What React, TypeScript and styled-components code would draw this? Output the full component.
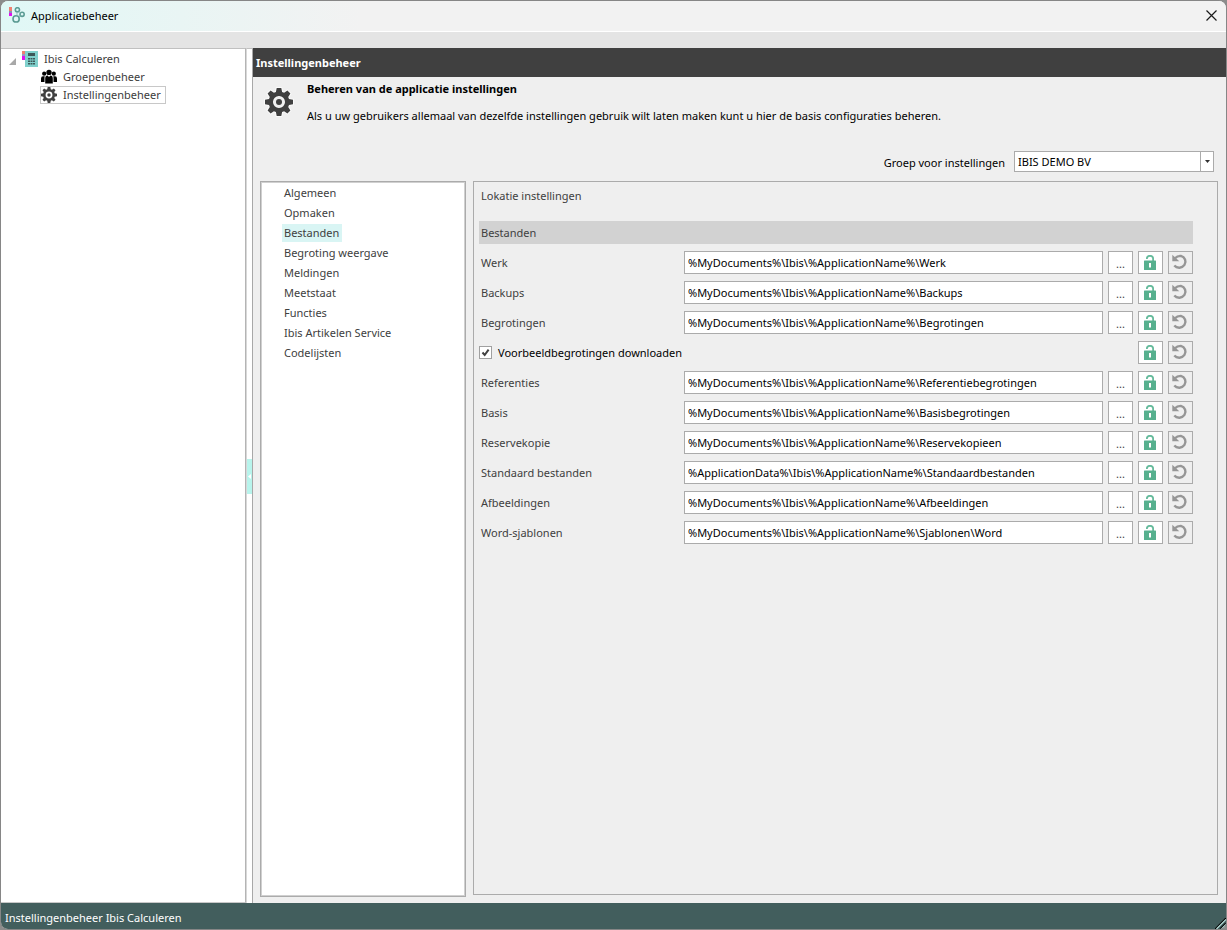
import React, { useState } from 'react';
import styled, { createGlobalStyle } from 'styled-components';

const GlobalStyle = createGlobalStyle`
  *, *::before, *::after { box-sizing: border-box; }
  body { margin: 0; background: #8c8c8c; }
  body, button, input, select {
    font-family: "Noto Sans", "Open Sans", sans-serif;
    font-size: 11px;
    line-height: 18px;
    color: #000;
  }
`;

const Window = styled.div`
  display: flex;
  flex-direction: column;
  min-height: 100vh;
  border: 1px solid #868686;
  border-radius: 8px;
  overflow: hidden;
  background: #efefef;
`;

const TitleBar = styled.header`
  display: flex;
  align-items: center;
  gap: 6px;
  height: 31px;
  padding: 0 7px 2px 8px;
  border-bottom: 1px solid #fff;
  background: linear-gradient(90deg, #e0f8f6 0, #f2f2f2 360px);
`;

const WindowTitle = styled.h1`
  flex: 1;
  margin: 0;
  padding-top: 2px;
  font-size: 11px;
  font-weight: 400;
`;

const CloseButton = styled.button`
  display: flex;
  padding: 2px;
  border: 0;
  background: none;
`;

const Strip = styled.div`
  height: 16px;
  background: #e4e4e4;
`;

const Body = styled.div`
  display: flex;
  flex: 1;
`;

const TreePane = styled.nav`
  width: 245px;
  padding-top: 1px;
  border-top: 1px solid #c0c0c0;
  border-right: 1px solid #b4b4b4;
  border-bottom: 1px solid #c8c8c8;
  background: #fff;
`;

const TreeItem = styled.div<{ $level: number; $selected?: boolean }>`
  display: flex;
  align-items: center;
  gap: 6px;
  width: fit-content;
  height: 18px;
  margin-left: ${(p) => (p.$level ? 39 : 7)}px;
  padding: 0 4px 0 0;
  border: 1px solid ${(p) => (p.$selected ? '#c8c8c8' : 'transparent')};
  color: #3c3c3c;
  white-space: nowrap;
`;

const Splitter = styled.div`
  display: flex;
  align-items: center;
  width: 7px;
  border-right: 1px solid #a8a8a8;
  border-left: 1px solid #d8d8d8;
  border-top: 1px solid #c0c0c0;
  background: #fff;
`;

const SplitterGrip = styled.button`
  display: flex;
  align-items: center;
  justify-content: center;
  width: 5px;
  height: 35px;
  padding: 0;
  border: 0;
  background: #b8f4ec;
`;

const Content = styled.main`
  display: flex;
  flex: 1;
  flex-direction: column;
  min-width: 0;
`;

const ContentHeader = styled.h2`
  height: 29px;
  margin: 0;
  padding: 0 3px;
  background: #404040;
  color: #fff;
  font-size: 11px;
  font-weight: 700;
  line-height: 29px;
`;

const Intro = styled.section`
  display: flex;
  gap: 14px;
  padding: 3px 12px 0;
`;

const IntroIcon = styled.div`
  padding-top: 8px;
  height: 36px;
`;

const IntroTitle = styled.h3`
  margin: 0 0 9px;
  font-size: 11px;
  font-weight: 700;
`;

const IntroText = styled.p`
  margin: 0;
`;

const GroupRow = styled.div`
  display: flex;
  align-items: center;
  justify-content: flex-end;
  gap: 9px;
  padding: 26px 12px 9px;
`;

const GroupLabel = styled.label`
  padding-top: 2px;
`;

const SelectBox = styled.div`
  position: relative;
  width: 200px;
  height: 21px;
`;

const Select = styled.select`
  width: 100%;
  height: 100%;
  padding: 0 16px 0 3px;
  border: 1px solid #ababab;
  border-radius: 0;
  background: #fff;
  appearance: none;
`;

const SelectArrow = styled.span`
  position: absolute;
  top: 1px;
  right: 1px;
  bottom: 1px;
  display: flex;
  align-items: center;
  justify-content: center;
  width: 13px;
  border-left: 1px solid #ababab;
  pointer-events: none;
`;

const Panels = styled.div`
  display: flex;
  flex: 1;
  align-items: stretch;
  gap: 7px;
  padding: 0 8px 6px 7px;
`;

const CategoryList = styled.ul`
  width: 206px;
  margin: 0;
  padding: 1px 0 0 20px;
  border: 1px solid #ababab;
  outline: 1px solid #d0d0d0;
  outline-offset: -2px;
  background: #fff;
  list-style: none;
`;

const Category = styled.li`
  display: flex;
  align-items: center;
  height: 20px;
`;

const CategoryLink = styled.a<{ $active: boolean }>`
  padding: 0 3px 0 2px;
  margin-left: 1px;
  background: ${(p) => (p.$active ? '#d9f5f4' : 'transparent')};
  color: #404040;
  text-decoration: none;
`;

const SettingsPanel = styled.section`
  flex: 1;
  min-width: 0;
  margin-bottom: 2px;
  padding: 5px 24px 0 5px;
  border: 1px solid #ababab;
`;

const PanelTitle = styled.h3`
  margin: 0 0 16px;
  padding: 0 2px;
  color: #404040;
  font-size: 11px;
  font-weight: 400;
`;

const SectionBar = styled.h4`
  height: 23px;
  margin: 0 0 3px;
  padding: 0 2px;
  background: #d2d2d2;
  color: #404040;
  font-size: 11px;
  font-weight: 400;
  line-height: 23px;
`;

const SettingRow = styled.div`
  display: flex;
  align-items: center;
  gap: 5px;
  height: 30px;
`;

const SettingLabel = styled.label`
  width: 200px;
  padding: 1px 0 0 2px;
  color: #404040;
`;

const PathInput = styled.input`
  flex: 1;
  min-width: 0;
  height: 23px;
  padding: 0 3px;
  border: 1px solid #ababab;
  border-radius: 0;
  background: #fff;
`;

const SquareButton = styled.button<{ $flat?: boolean }>`
  display: flex;
  align-items: center;
  justify-content: center;
  width: 25px;
  height: 23px;
  padding: 0;
  border: 1px solid #ababab;
  background: ${(p) => (p.$flat ? 'transparent' : '#fff')};
  color: #404040;
`;

const BrowseButton = styled(SquareButton)`
  padding-top: 3px;
`;

const CheckLabel = styled.label`
  display: flex;
  flex: 1;
  align-items: center;
  gap: 6px;
  padding-top: 1px;
`;

const CheckBox = styled.input`
  width: 13px;
  height: 13px;
  margin: 0;
  border: 1px solid #a0a0a0;
  background: #fff;
  appearance: none;
  &:checked {
    background: #fff url("data:image/svg+xml,%3Csvg xmlns='http://www.w3.org/2000/svg' viewBox='0 0 11 11'%3E%3Cpath d='M2.5 5.5l2.2 2.5L8.6 2.6' fill='none' stroke='%23404040' stroke-width='2'/%3E%3C/svg%3E") center / 11px 11px no-repeat;
  }
`;

const StatusBar = styled.footer`
  position: relative;
  height: 26px;
  padding: 0 4px;
  background: #425e5d;
  color: #fff;
  line-height: 30px;
`;

const ResizeGrip = styled.svg`
  position: absolute;
  right: 0;
  bottom: 0;
`;

const AppLogo = () => (
  <svg width="16" height="16" viewBox="0 0 16 16" fill="none" aria-hidden="true">
    <path fill="#f08070" d="M0 0h3v4H0z" />
    <path fill="#9088b8" d="M0 4h3v2H0z" />
    <path fill="#e010f0" d="M0 6h3v3H0z" />
    <g stroke="#5c9c94" strokeWidth="1.6">
      <circle cx="8.400" cy="2.800" r="2.1" />
      <circle cx="13.1" cy="7.3" r="2.1" />
      <circle cx="7.1" cy="11.900" r="3.1" />
    </g>
    <path d="M9.900 4.500l1.700 1.400M8 5v3.500M9.800 9.800l1.500-1" stroke="#8cbcb6" strokeWidth="1" />
  </svg>
);

const CalculatorIcon = () => (
  <svg width="16" height="16" viewBox="0 0 16 16" aria-hidden="true">
    <path fill="#80d0cc" d="M3 0h13v16H3z" />
    <path fill="#f08070" d="M0 0h3v3H0z" />
    <path fill="#a090c0" d="M0 3h3v2H0z" />
    <path fill="#e010f0" d="M0 5h3v4H0z" />
    <path
      fill="#3c5858"
      d="M6 2h7v3H6zM6 7h2v1.6H6zM8.5 7h2v1.6h-2zM11 7h2v1.6h-2zM6 9.5h2v1.6H6zM8.5 9.5h2v1.6h-2zM11 9.5h2v1.6h-2zM6 12h2v1.6H6zM8.5 12h2v1.6h-2zM11 12h2v1.6h-2z"
    />
  </svg>
);

const PeopleIcon = () => (
  <svg width="16" height="16" viewBox="0 0 16 16" aria-hidden="true">
    <circle cx="8" cy="3.4" r="2.7" />
    <circle cx="3.2" cy="4.7" r="2.1" />
    <circle cx="12.8" cy="4.7" r="2.1" />
    <path d="M4.2 14.5V9.5Q4.2 6.7 6.6 6.5L8 8l1.4-1.5Q11.8 6.7 11.8 9.5v5z" />
    <path d="M0 13V9.500Q0 7.300 2 7.200h1.700L3.500 9v4zM16 13V9.500Q16 7.300 14 7.200h-1.700L12.500 9v4z" />
  </svg>
);

const GearIcon = ({ size, halo }: { size: number; halo?: boolean }) => (
  <svg width={size} height={size} viewBox="0 0 28 28" overflow="visible" aria-hidden="true">
    <path
      fill="#404040"
      fillRule="evenodd"
      stroke={halo ? '#fff' : 'none'}
      strokeWidth="2"
      strokeOpacity="0.7"
      paintOrder="stroke"
      d="M11.7 0h4.600l.8 4 2 .8L22.400 2.600l3 3L23.200 8.900l.8 2 4 .8v4.600l-4 .8-.8 2 2.200 3.300-3 3-3.300-2.200-2 .8-.8 4h-4.600l-.8-4-2-.8-3.300 2.200-3-3L4.800 19.100l-.8-2-4-.8v-4.600l4-.8.8-2L2.600 5.600l3-3L8.900 4.800l2-.8zM14 8a6 6 0 1 0 0 12a6 6 0 1 0 0-12z"
    />
    <circle cx="14" cy="14" r="3" fill="#404040" />
  </svg>
);

const LockIcon = () => (
  <svg width="13" height="15" viewBox="0 0 13 15" aria-hidden="true">
    <path d="M2.900 4V3.600a3 2.700 0 0 1 6.200 0V6" fill="none" stroke="#66bb9c" strokeWidth="1.800" />
    <path
      fill="#56b08e"
      fillRule="evenodd"
      d="M.5 5.500h11q.5 0 .5.500v8.500q0 .500-.5.500H.5q-.5 0-.5-.5V6q0-.5.500-.5zM5 8v4.500h2V8z"
    />
  </svg>
);

const ResetIcon = () => (
  <svg width="17" height="16" viewBox="0 0 17 16" fill="none" aria-hidden="true">
    <path d="M3 4.200C4.500 2.500 6.600 1.900 8.800 1.900a6.300 6 0 1 1-6.500 9.600" stroke="#969696" strokeWidth="2.400" />
    <path d="M.3.800v6.400h7z" fill="#969696" />
  </svg>
);

const categories = [
  'Algemeen',
  'Opmaken',
  'Bestanden',
  'Begroting weergave',
  'Meldingen',
  'Meetstaat',
  'Functies',
  'Ibis Artikelen Service',
  'Codelijsten',
];

type Setting = { label: string; path?: string };

const settings: Setting[] = [
  { label: 'Werk', path: '%MyDocuments%\\Ibis\\%ApplicationName%\\Werk' },
  { label: 'Backups', path: '%MyDocuments%\\Ibis\\%ApplicationName%\\Backups' },
  { label: 'Begrotingen', path: '%MyDocuments%\\Ibis\\%ApplicationName%\\Begrotingen' },
  { label: 'Voorbeeldbegrotingen downloaden' },
  { label: 'Referenties', path: '%MyDocuments%\\Ibis\\%ApplicationName%\\Referentiebegrotingen' },
  { label: 'Basis', path: '%MyDocuments%\\Ibis\\%ApplicationName%\\Basisbegrotingen' },
  { label: 'Reservekopie', path: '%MyDocuments%\\Ibis\\%ApplicationName%\\Reservekopieen' },
  { label: 'Standaard bestanden', path: '%ApplicationData%\\Ibis\\%ApplicationName%\\Standaardbestanden' },
  { label: 'Afbeeldingen', path: '%MyDocuments%\\Ibis\\%ApplicationName%\\Afbeeldingen' },
  { label: 'Word-sjablonen', path: '%MyDocuments%\\Ibis\\%ApplicationName%\\Sjablonen\\Word' },
];

const SettingLine = ({ label, path }: Setting) => (
  <SettingRow>
    {path ? (
      <>
        <SettingLabel htmlFor={label}>{label}</SettingLabel>
        <PathInput id={label} type="text" defaultValue={path} />
        <BrowseButton type="button">...</BrowseButton>
      </>
    ) : (
      <CheckLabel>
        <CheckBox type="checkbox" defaultChecked />
        {label}
      </CheckLabel>
    )}
    <SquareButton type="button" aria-label="Vergrendelen">
      <LockIcon />
    </SquareButton>
    <SquareButton type="button" $flat aria-label="Herstellen">
      <ResetIcon />
    </SquareButton>
  </SettingRow>
);

export default function App() {
  const [active, setActive] = useState('Bestanden');

  return (
    <>
      <GlobalStyle />
      <Window>
        <TitleBar>
          <AppLogo />
          <WindowTitle>Applicatiebeheer</WindowTitle>
          <CloseButton type="button" aria-label="Sluiten">
            <svg width="11" height="11" viewBox="0 0 11 11" stroke="#1a1a1a" strokeWidth="1.2">
              <path d="M.5.5l10 10M10.5.5l-10 10" />
            </svg>
          </CloseButton>
        </TitleBar>
        <Strip />
        <Body>
          <TreePane>
            <TreeItem $level={0}>
              <svg width="7" height="11" viewBox="0 0 7 11" aria-hidden="true">
                <path d="M7 4v7H0z" fill="#a8a8a8" />
              </svg>
              <CalculatorIcon />
              Ibis Calculeren
            </TreeItem>
            <TreeItem $level={1}>
              <PeopleIcon />
              Groepenbeheer
            </TreeItem>
            <TreeItem $level={1} $selected>
              <GearIcon size={16} />
              Instellingenbeheer
            </TreeItem>
          </TreePane>
          <Splitter>
            <SplitterGrip type="button" aria-label="Paneel inklappen">
              <svg width="3" height="5" viewBox="0 0 3 5">
                <path d="M3 0v5L0 2.5z" fill="#fff" />
              </svg>
            </SplitterGrip>
          </Splitter>
          <Content>
            <ContentHeader>Instellingenbeheer</ContentHeader>
            <Intro>
              <IntroIcon>
                <GearIcon size={28} halo />
              </IntroIcon>
              <div>
                <IntroTitle>Beheren van de applicatie instellingen</IntroTitle>
                <IntroText>
                  Als u uw gebruikers allemaal van dezelfde instellingen gebruik wilt laten maken kunt u hier de basis
                  configuraties beheren.
                </IntroText>
              </div>
            </Intro>
            <GroupRow>
              <GroupLabel htmlFor="groep">Groep voor instellingen</GroupLabel>
              <SelectBox>
                <Select id="groep">
                  <option>IBIS DEMO BV</option>
                </Select>
                <SelectArrow>
                  <svg width="5" height="3" viewBox="0 0 5 3">
                    <path d="M0 0h5L2.5 3z" fill="#303030" />
                  </svg>
                </SelectArrow>
              </SelectBox>
            </GroupRow>
            <Panels>
              <CategoryList>
                {categories.map((name) => (
                  <Category key={name}>
                    <CategoryLink
                      href="#"
                      $active={name === active}
                      onClick={(e) => {
                        e.preventDefault();
                        setActive(name);
                      }}
                    >
                      {name}
                    </CategoryLink>
                  </Category>
                ))}
              </CategoryList>
              <SettingsPanel>
                <PanelTitle>Lokatie instellingen</PanelTitle>
                <SectionBar>Bestanden</SectionBar>
                {settings.map((s) => (
                  <SettingLine key={s.label} {...s} />
                ))}
              </SettingsPanel>
            </Panels>
          </Content>
        </Body>
        <StatusBar>
          Instellingenbeheer Ibis Calculeren
          <ResizeGrip width="11" height="11" viewBox="0 0 11 11" strokeWidth="1.2">
            <path d="M0 11L11 0M5 11l6-6" stroke="#000" />
            <path d="M1.5 11L11 1.5M6.5 11L11 6.5" stroke="#b8dcd8" />
          </ResizeGrip>
        </StatusBar>
      </Window>
    </>
  );
}
